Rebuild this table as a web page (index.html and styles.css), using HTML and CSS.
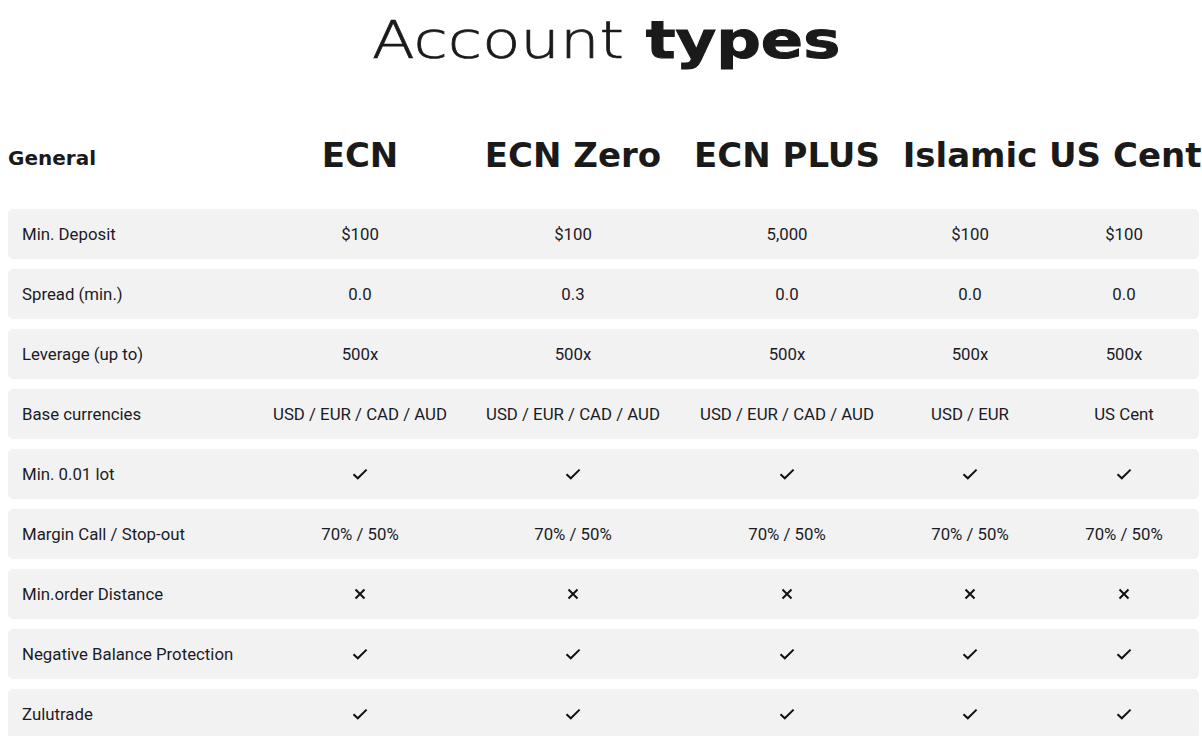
FILE: index.html
```html
<!DOCTYPE html>
<html>
<head>
<meta charset="utf-8">
<link rel="stylesheet" href="styles.css">
</head>
<body>
<div class="page">
  <h1 class="title"><span class="title-inner"><span class="light">Account</span> <span class="heavy">types</span></span></h1>
  <div class="table">
    <div class="head">
      <div class="hcell hlabel">General</div>
      <div class="hcell">ECN</div>
      <div class="hcell">ECN Zero</div>
      <div class="hcell">ECN PLUS</div>
      <div class="hcell">Islamic</div>
      <div class="hcell">US Cent</div>
    </div>
    <div class="row">
      <div class="cell label">Min. Deposit</div>
      <div class="cell">$100</div><div class="cell">$100</div><div class="cell">5,000</div><div class="cell">$100</div><div class="cell">$100</div>
    </div>
    <div class="row">
      <div class="cell label">Spread (min.)</div>
      <div class="cell">0.0</div><div class="cell">0.3</div><div class="cell">0.0</div><div class="cell">0.0</div><div class="cell">0.0</div>
    </div>
    <div class="row">
      <div class="cell label">Leverage (up to)</div>
      <div class="cell">500x</div><div class="cell">500x</div><div class="cell">500x</div><div class="cell">500x</div><div class="cell">500x</div>
    </div>
    <div class="row">
      <div class="cell label">Base currencies</div>
      <div class="cell">USD / EUR / CAD / AUD</div><div class="cell">USD / EUR / CAD / AUD</div><div class="cell">USD / EUR / CAD / AUD</div><div class="cell">USD / EUR</div><div class="cell">US Cent</div>
    </div>
    <div class="row">
      <div class="cell label">Min. 0.01 lot</div>
      <div class="cell"><svg class="ic" viewBox="0 0 16 12"><path d="M1.5 6.2 L5.8 10.3 L14.6 1.6"/></svg></div>
      <div class="cell"><svg class="ic" viewBox="0 0 16 12"><path d="M1.5 6.2 L5.8 10.3 L14.6 1.6"/></svg></div>
      <div class="cell"><svg class="ic" viewBox="0 0 16 12"><path d="M1.5 6.2 L5.8 10.3 L14.6 1.6"/></svg></div>
      <div class="cell"><svg class="ic" viewBox="0 0 16 12"><path d="M1.5 6.2 L5.8 10.3 L14.6 1.6"/></svg></div>
      <div class="cell"><svg class="ic" viewBox="0 0 16 12"><path d="M1.5 6.2 L5.8 10.3 L14.6 1.6"/></svg></div>
    </div>
    <div class="row">
      <div class="cell label">Margin Call / Stop-out</div>
      <div class="cell">70% / 50%</div><div class="cell">70% / 50%</div><div class="cell">70% / 50%</div><div class="cell">70% / 50%</div><div class="cell">70% / 50%</div>
    </div>
    <div class="row">
      <div class="cell label">Min.order Distance</div>
      <div class="cell"><svg class="ix" viewBox="0 0 12 12"><path d="M1.5 1.5 L10.5 10.5 M10.5 1.5 L1.5 10.5"/></svg></div>
      <div class="cell"><svg class="ix" viewBox="0 0 12 12"><path d="M1.5 1.5 L10.5 10.5 M10.5 1.5 L1.5 10.5"/></svg></div>
      <div class="cell"><svg class="ix" viewBox="0 0 12 12"><path d="M1.5 1.5 L10.5 10.5 M10.5 1.5 L1.5 10.5"/></svg></div>
      <div class="cell"><svg class="ix" viewBox="0 0 12 12"><path d="M1.5 1.5 L10.5 10.5 M10.5 1.5 L1.5 10.5"/></svg></div>
      <div class="cell"><svg class="ix" viewBox="0 0 12 12"><path d="M1.5 1.5 L10.5 10.5 M10.5 1.5 L1.5 10.5"/></svg></div>
    </div>
    <div class="row">
      <div class="cell label">Negative Balance Protection</div>
      <div class="cell"><svg class="ic" viewBox="0 0 16 12"><path d="M1.5 6.2 L5.8 10.3 L14.6 1.6"/></svg></div>
      <div class="cell"><svg class="ic" viewBox="0 0 16 12"><path d="M1.5 6.2 L5.8 10.3 L14.6 1.6"/></svg></div>
      <div class="cell"><svg class="ic" viewBox="0 0 16 12"><path d="M1.5 6.2 L5.8 10.3 L14.6 1.6"/></svg></div>
      <div class="cell"><svg class="ic" viewBox="0 0 16 12"><path d="M1.5 6.2 L5.8 10.3 L14.6 1.6"/></svg></div>
      <div class="cell"><svg class="ic" viewBox="0 0 16 12"><path d="M1.5 6.2 L5.8 10.3 L14.6 1.6"/></svg></div>
    </div>
    <div class="row">
      <div class="cell label">Zulutrade</div>
      <div class="cell"><svg class="ic" viewBox="0 0 16 12"><path d="M1.5 6.2 L5.8 10.3 L14.6 1.6"/></svg></div>
      <div class="cell"><svg class="ic" viewBox="0 0 16 12"><path d="M1.5 6.2 L5.8 10.3 L14.6 1.6"/></svg></div>
      <div class="cell"><svg class="ic" viewBox="0 0 16 12"><path d="M1.5 6.2 L5.8 10.3 L14.6 1.6"/></svg></div>
      <div class="cell"><svg class="ic" viewBox="0 0 16 12"><path d="M1.5 6.2 L5.8 10.3 L14.6 1.6"/></svg></div>
      <div class="cell"><svg class="ic" viewBox="0 0 16 12"><path d="M1.5 6.2 L5.8 10.3 L14.6 1.6"/></svg></div>
    </div>
  </div>
</div>
</body>
</html>
```

FILE: styles.css
```css
html, body {
  margin: 0;
  padding: 0;
  background: #ffffff;
}

.page {
  padding: 0 3px 0 8px;
  color: #1a1a1a;
}

.title {
  margin: 0;
  padding-top: 8px;
  height: 106px;
  text-align: center;
  font-family: "DejaVu Sans", sans-serif;
  font-size: 52px;
  line-height: 64px;
  color: #1a1a1a;
}

.title-inner {
  display: inline-block;
  transform: scaleX(1.2);
  margin-left: 6px;
}

.light {
  font-weight: 200;
  -webkit-text-stroke: 0.7px #1a1a1a;
}

.heavy {
  font-weight: 700;
  -webkit-text-stroke: 1px #1a1a1a;
}

.head,
.row {
  display: grid;
  grid-template-columns: 249px 206px 220px 208px 158px 150px;
}

.head {
  box-sizing: border-box;
  height: 95px;
  padding-bottom: 13px;
  align-items: center;
}

.hcell {
  font-family: "DejaVu Sans", sans-serif;
  font-weight: 700;
  font-size: 34px;
  text-align: center;
  white-space: nowrap;
  color: #1a1a1a;
}

.hlabel {
  font-size: 20px;
  text-align: left;
  padding-top: 6px;
}

.row {
  height: 50px;
  margin-bottom: 10px;
  background: #f2f2f2;
  border-radius: 5px;
  align-items: center;
}

.cell {
  font-family: Roboto, "Liberation Sans", sans-serif;
  font-size: 16.8px;
  color: #1b1b27;
  text-align: center;
  white-space: nowrap;
  display: flex;
  justify-content: center;
  align-items: center;
}

.cell.label {
  justify-content: flex-start;
  padding-left: 14px;
}

.ic {
  width: 16px;
  height: 12px;
  fill: none;
  stroke: #111;
  stroke-width: 2;
}

.ix {
  width: 12px;
  height: 12px;
  fill: none;
  stroke: #111;
  stroke-width: 2;
}
```
